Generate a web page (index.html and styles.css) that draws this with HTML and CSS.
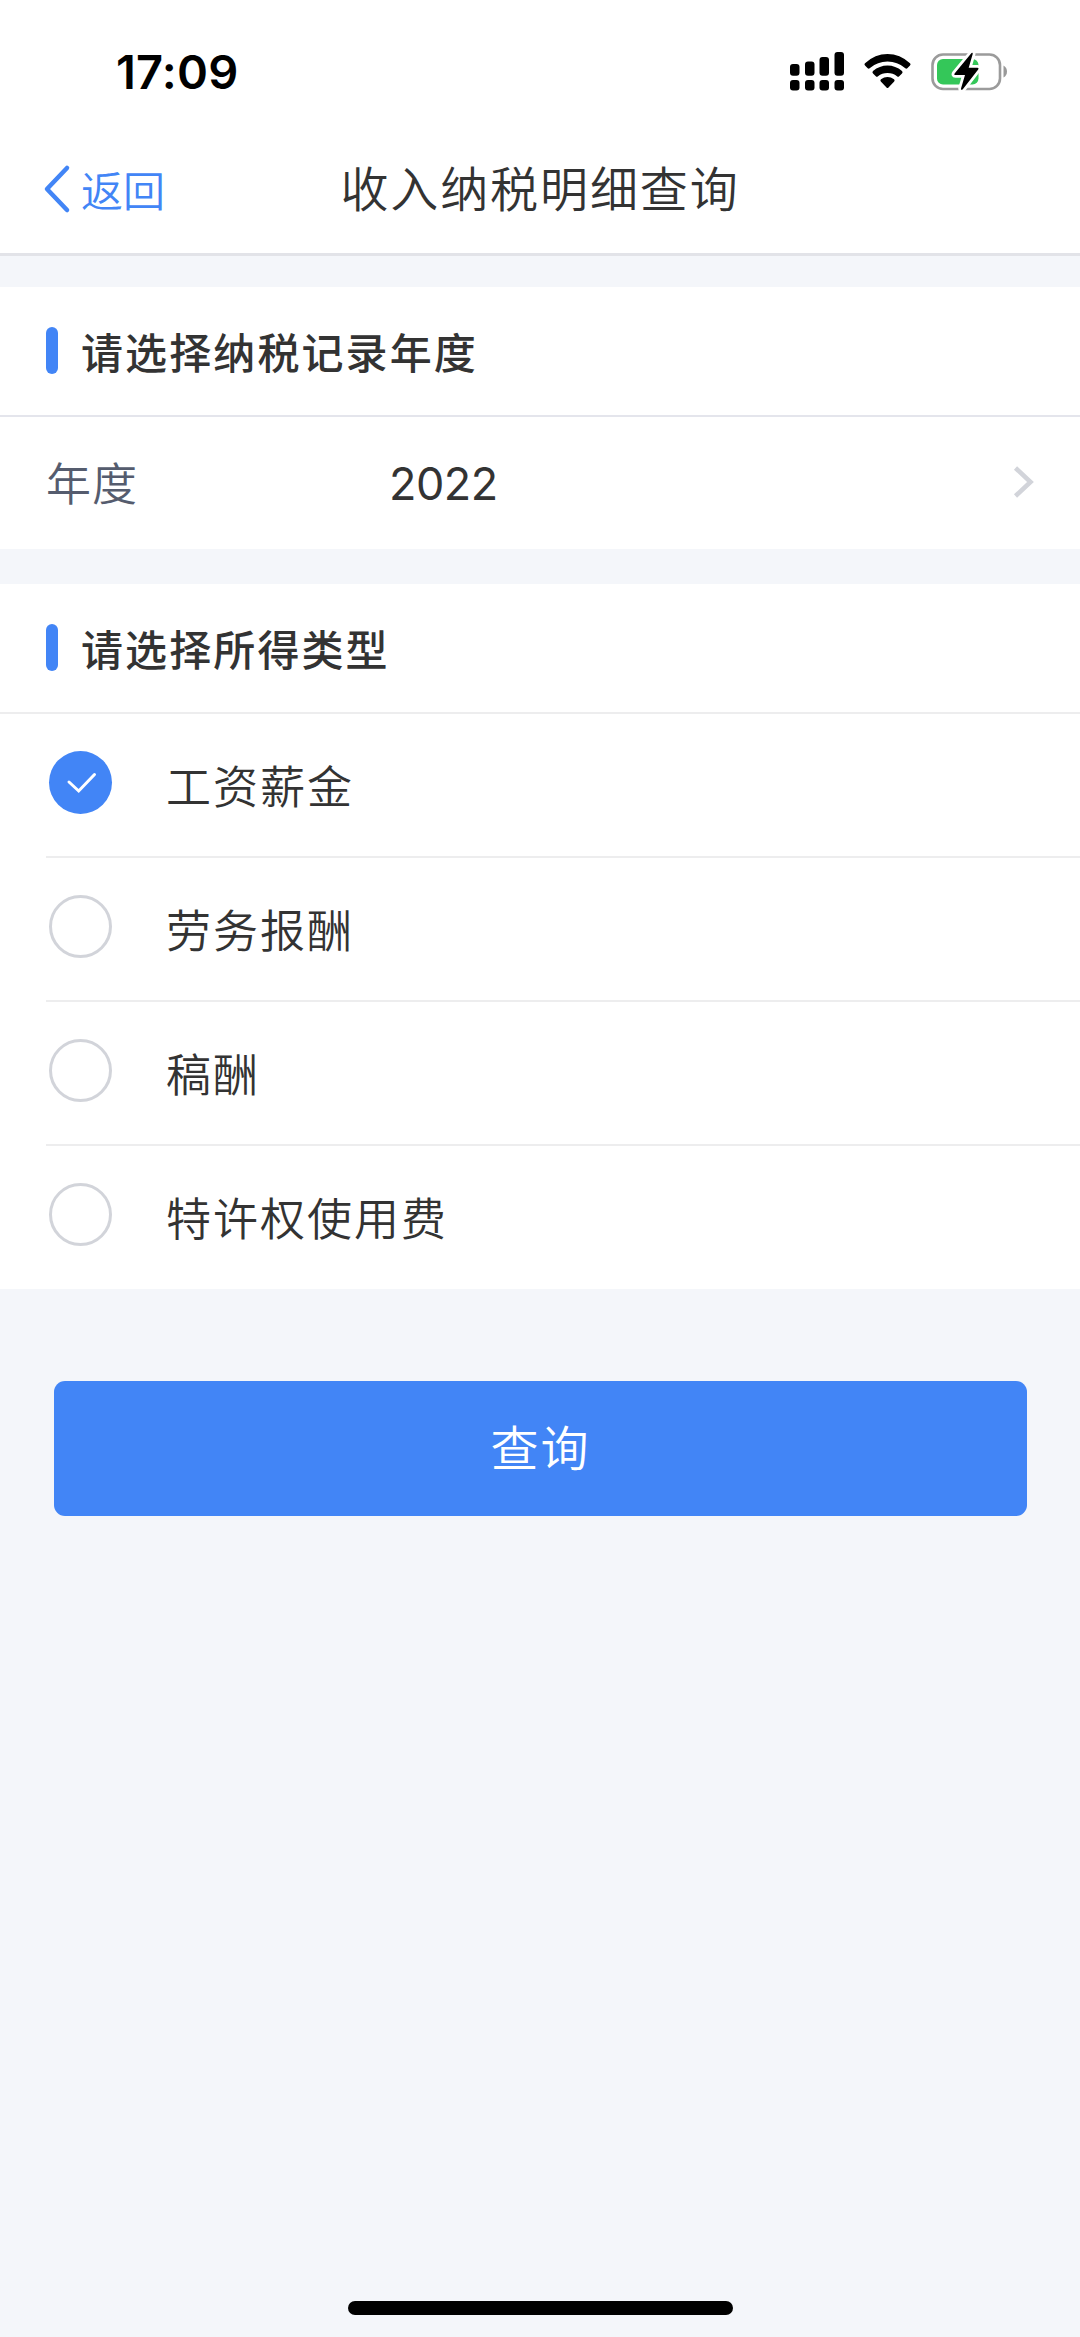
FILE: index.html
```html
<!DOCTYPE html>
<html lang="zh-CN">
<head>
<meta charset="utf-8">
<title>收入纳税明细查询</title>
<link rel="stylesheet" href="styles.css">
</head>
<body>
<div class="screen">
  <div class="status">
    <span class="clock">17:09</span>
    <svg class="status-icons" width="224" height="44" viewBox="0 0 224 44">
      <g fill="#000">
        <rect x="0" y="14" width="9.5" height="11.8" rx="3"/>
        <rect x="15" y="11.500" width="9.500" height="14.300" rx="3"/>
        <rect x="29.500" y="7" width="9.500" height="18.800" rx="3"/>
        <rect x="44.500" y="2" width="9.500" height="23.800" rx="3"/>
        <rect x="0" y="30" width="9.500" height="10.500" rx="3"/>
        <rect x="15" y="30" width="9.500" height="10.500" rx="3"/>
        <rect x="29.500" y="30" width="9.500" height="10.500" rx="3"/>
        <rect x="44.500" y="30" width="9.500" height="10.500" rx="3"/>
        <path d="M75 13.200Q85 4 97.500 4T120 13.200Q121.200 14.300 120 15.500L117.300 18.200Q116.300 19.200 115 18Q107.500 11.500 97.500 11.500T80 18Q78.700 19.200 77.700 18.200L75 15.500Q73.800 14.300 75 13.200Z"/>
        <path d="M83 21.100Q89.500 15.600 97.500 15.600T112 21.100Q113.200 22.200 112 23.400L109.200 26.200Q108.200 27.200 107 26.200Q103 23 97.500 23T88 26.200Q86.800 27.200 85.800 26.200L83 23.400Q81.800 22.200 83 21.100Z"/>
        <path d="M91 29.300Q94 27 97.500 27T104 29.300Q105.200 30.300 104.200 31.400L98.500 37.500Q97.500 38.600 96.500 37.500L90.800 31.400Q89.800 30.300 91 29.300Z"/>
      </g>
      <rect x="142.500" y="4.500" width="67.500" height="34.500" rx="10.500" fill="none" stroke="#9b9b9b" stroke-width="2.600"/>
      <path d="M213.500 15.500Q217 17.500 217 21.500T213.500 27.500Z" fill="#999"/>
      <rect x="147" y="9" width="41.500" height="25.500" rx="6" fill="#34c759"/>
      <path d="M181.500 3Q183 2.300 182.700 4L178.700 17.800H187.500Q189.300 17.800 188.200 19.500L172.800 39.300Q171 41 171 38.500L175 25H165.500Q163.500 25 164.800 23.200Z" fill="#000" stroke="#fff" stroke-width="5.500" paint-order="stroke"/>
    </svg>
  </div>

  <header class="nav">
    <a class="back">
      <svg width="28" height="50" viewBox="0 0 28 50"><path d="M24 4L4 25L24 46" fill="none" stroke="#4285f6" stroke-width="4.500" stroke-linecap="round" stroke-linejoin="round"/></svg>
      <span>返回</span>
    </a>
    <h1 class="nav-title">收入纳税明细查询</h1>
  </header>

  <section class="card">
    <h2 class="card-title">请选择纳税记录年度</h2>
    <div class="field">
      <span class="field-label">年度</span>
      <span class="field-value">2022</span>
      <svg class="chevron" width="24" height="36" viewBox="0 0 24 36"><path d="M4.500 4L19.500 18L4.500 32" fill="none" stroke="#d2d4da" stroke-width="4.600"/></svg>
    </div>
  </section>

  <section class="card types">
    <h2 class="card-title">请选择所得类型</h2>
    <ul class="options">
      <li class="option"><span class="radio checked"><svg width="63" height="63" viewBox="0 0 63 63"><path d="M20 31L29.700 40L45.500 23.500" fill="none" stroke="#fff" stroke-width="3" stroke-linecap="round"/></svg></span><span class="option-text">工资薪金</span></li>
      <li class="option"><span class="radio"></span><span class="option-text">劳务报酬</span></li>
      <li class="option"><span class="radio"></span><span class="option-text">稿酬</span></li>
      <li class="option"><span class="radio"></span><span class="option-text">特许权使用费</span></li>
    </ul>
  </section>

  <button class="submit">查询</button>
  <div class="home-bar"></div>
</div>
</body>
</html>
```
FILE: styles.css
```css
* { box-sizing: border-box; }

body {
  margin: 0;
  background: #f4f6fa;
  color: #333;
  font-family: "Noto Sans CJK SC", sans-serif;
  font-weight: 350;
}

.screen {
  display: flex;
  flex-direction: column;
  height: 2337px;
}

.status {
  display: flex;
  justify-content: space-between;
  flex: none;
  height: 127px;
  padding: 50px 66px 0 116px;
  background: #fff;
}

.clock {
  color: #000;
  font: 600 47px/44px Inter, sans-serif;
  letter-spacing: 0.2px;
}

.nav {
  display: grid;
  grid-template-columns: 1fr auto 1fr;
  align-items: center;
  flex: none;
  height: 129px;
  padding: 0 43px 3px;
  border-bottom: 3px solid #e2e3e8;
  background: #fff;
}

.back {
  display: flex;
  align-items: center;
  gap: 10px;
  color: #4285f6;
  font-size: 42px;
  line-height: 60px;
}

.nav-title {
  margin: 0;
  padding-bottom: 5px;
  font-size: 48px;
  font-weight: 350;
  line-height: 60px;
  letter-spacing: 1.9px;
}

.card {
  flex: none;
  margin-top: 31px;
  background: #fff;
}

.types { margin-top: 35px; }

.card-title {
  display: flex;
  align-items: center;
  gap: 23px;
  height: 130px;
  margin: 0;
  padding: 0 46px 2px;
  border-bottom: 2px solid #e4e5ec;
  font-size: 42px;
  font-weight: 500;
  letter-spacing: 2.1px;
}

.card-title::before {
  width: 12px;
  height: 47px;
  border-radius: 6px;
  background: #4285f6;
  content: "";
}

.types .card-title { border-bottom-color: #ededee; }

.field {
  display: flex;
  align-items: center;
  height: 132px;
  padding: 0 45px 3px 46px;
  font-size: 45px;
}

.field-label {
  width: 343px;
  color: #555c6e;
  letter-spacing: 1px;
}

.field-value {
  flex: 1;
  padding-top: 4px;
  font-family: Inter, sans-serif;
  font-weight: 400;
  letter-spacing: -0.5px;
}

.options {
  margin: 0;
  padding: 0 0 0 46px;
  list-style: none;
}

.option {
  display: flex;
  align-items: center;
  gap: 54px;
  height: 144px;
  padding: 0 0 2px 3px;
  border-bottom: 2px solid #ededee;
  font-size: 45px;
  letter-spacing: 2px;
}

.option:last-child {
  height: 143px;
  border-bottom: 0;
}

.radio {
  width: 63px;
  height: 63px;
  margin-bottom: 4px;
  border: 3px solid #d2d4da;
  border-radius: 50%;
}

.radio.checked {
  border: 0;
  background: #4285f6;
}

.radio svg { display: block; }

.submit {
  flex: none;
  height: 135px;
  margin: 92px 53px 0 54px;
  padding: 0 0 8px;
  border: 0;
  border-radius: 11px;
  background: #4285f6;
  color: #fff;
  font: 350 48px "Noto Sans CJK SC", sans-serif;
  letter-spacing: 2px;
}

.home-bar {
  width: 385px;
  height: 14px;
  margin: auto auto 22px 348px;
  border-radius: 7px;
  background: #000;
}
```
